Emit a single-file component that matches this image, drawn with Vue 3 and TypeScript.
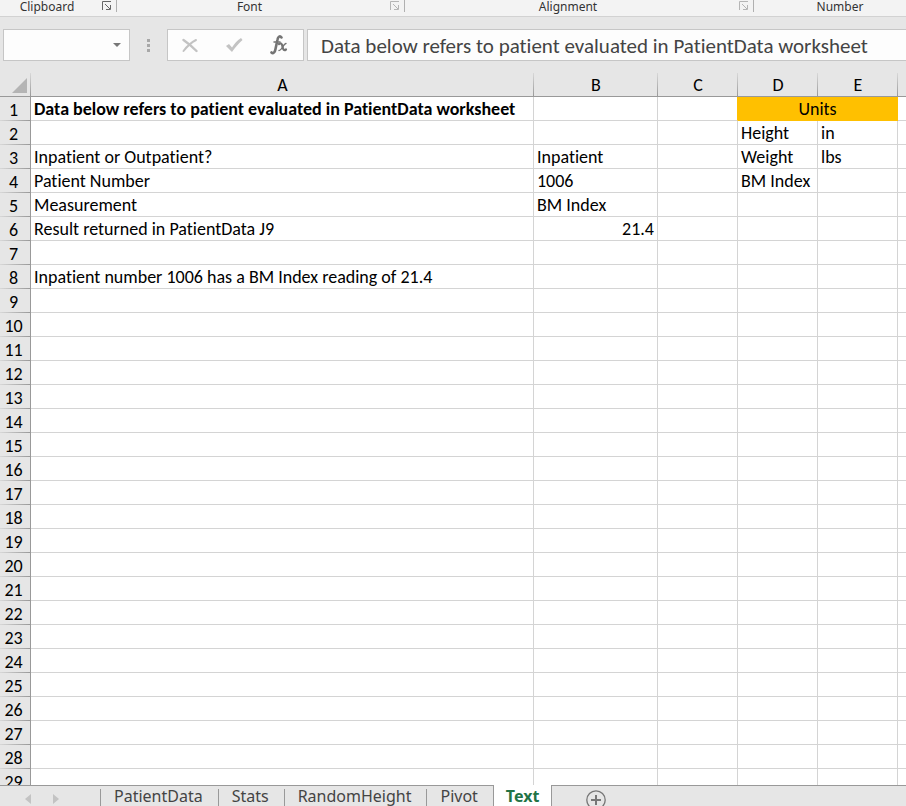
<script setup lang="ts">
import { ref } from 'vue'

interface Group { name: string; kind: string; active: boolean; launcher: boolean }
interface Cell { text: string; kind?: string; span?: number }

const groups: Group[] = [
  { name: 'Clipboard', kind: 'clipboard', active: true, launcher: true },
  { name: 'Font', kind: 'font', active: false, launcher: true },
  { name: 'Alignment', kind: 'alignment', active: false, launcher: true },
  { name: 'Number', kind: 'number', active: false, launcher: false },
]

const columns = ['A', 'B', 'C', 'D', 'E', '']
const formula = ref('Data below refers to patient evaluated in PatientData worksheet')
const cellName = ref('')

const content: Record<number, Cell[]> = {
  1: [
    { text: 'Data below refers to patient evaluated in PatientData worksheet', kind: 'bold' },
    { text: '' },
    { text: '', kind: 'before-units' },
    { text: 'Units', kind: 'units', span: 2 },
    { text: '' },
  ],
  2: [{ text: '' }, { text: '' }, { text: '' }, { text: 'Height' }, { text: 'in' }, { text: '' }],
  3: [{ text: 'Inpatient or Outpatient?' }, { text: 'Inpatient' }, { text: '' }, { text: 'Weight' }, { text: 'lbs' }, { text: '' }],
  4: [{ text: 'Patient Number' }, { text: '1006' }, { text: '' }, { text: 'BM Index' }, { text: '' }, { text: '' }],
  5: [{ text: 'Measurement' }, { text: 'BM Index' }, { text: '' }, { text: '' }, { text: '' }, { text: '' }],
  6: [{ text: 'Result returned in PatientData J9' }, { text: '21.4', kind: 'numeric' }, { text: '' }, { text: '' }, { text: '' }, { text: '' }],
  8: [{ text: 'Inpatient number 1006 has a BM Index reading of 21.4' }, { text: '' }, { text: '' }, { text: '' }, { text: '' }, { text: '' }],
}
const blank: Cell[] = columns.map(() => ({ text: '' }))
const rows = Array.from({ length: 29 }, (_, i) => ({ number: i + 1, cells: content[i + 1] ?? blank }))

const sheets = ['PatientData', 'Stats', 'RandomHeight', 'Pivot', 'Text']
const current = ref('Text')
</script>

<template>
  <div class="workbook">
    <header class="ribbon">
      <div v-for="g in groups" :key="g.name" class="group" :class="g.kind">
        <span class="group-name">{{ g.name }}</span>
        <button v-if="g.launcher" class="launcher" :class="{ active: g.active }" :aria-label="g.name + ' settings'">
          <svg width="10" height="10" viewBox="0 0 10 10" fill="none" stroke="currentColor">
            <path d="M0.5 9V0.5H9M3 3L8 8M8.5 4V8.5H4" />
          </svg>
        </button>
      </div>
    </header>

    <div class="formula-bar">
      <div class="name-box">
        <input v-model="cellName" class="name-input" aria-label="Name box" />
        <button class="name-arrow" aria-label="Named ranges">
          <svg width="8" height="4" viewBox="0 0 8 4"><path d="M0 0H8L4 4Z" fill="#777" /></svg>
        </button>
      </div>
      <svg class="grip" width="3" height="13" viewBox="0 0 3 13" fill="#a8a8a8">
        <path d="M0 0H3V3H0ZM0 5H3V8H0ZM0 10H3V13H0Z" />
      </svg>
      <div class="actions">
        <button class="action" aria-label="Cancel">
          <svg width="16" height="15" viewBox="0 0 16 15" fill="none" stroke="#c3c3c3" stroke-linecap="round">
            <path d="M1.500 2C6 5 10 8.500 14.500 13" stroke-width="2.400" />
            <path d="M14 2C9 4.500 5 8.500 1.500 13" stroke-width="2" />
          </svg>
        </button>
        <button class="action" aria-label="Enter">
          <svg width="18" height="16" viewBox="0 0 18 16" fill="#c3c3c3">
            <path d="M1 9L4 7L7 10.500C9.500 6.500 12 3.500 16 1L17.500 3C13.500 6.500 10 10.500 7 15Z" />
          </svg>
        </button>
        <button class="action" aria-label="Insert function">
          <svg width="18" height="20" viewBox="0 0 18 20" fill="none" stroke="#747474" stroke-linecap="round">
            <path d="M11.500 2.500C10 0.500 8 1.500 7.500 4.500L5.500 14C5 17.500 3 19 1.500 17.500" stroke-width="2.600" />
            <path d="M4 7H10" stroke-width="1.500" />
            <path d="M9 9C11 7.500 12 9 12.500 11.500C13 14.500 14 16 16 14.500" stroke-width="2.200" />
            <path d="M16 8.500C13.500 8.500 12 15.500 9 15.500" stroke-width="1.400" />
          </svg>
        </button>
      </div>
      <input v-model="formula" class="formula-input" aria-label="Formula" />
    </div>

    <main class="grid-area">
      <table class="sheet">
        <colgroup>
          <col class="w-head" /><col class="w-a" /><col class="w-b" />
          <col class="w-c" /><col class="w-c" /><col class="w-c" /><col />
        </colgroup>
        <thead>
          <tr>
            <th class="corner">
              <svg width="15" height="15" viewBox="0 0 15 15"><path d="M15 0V15H0Z" fill="#b4b4b4" /></svg>
            </th>
            <th v-for="(c, i) in columns" :key="i" class="col-head" scope="col">{{ c }}</th>
          </tr>
        </thead>
        <tbody>
          <tr v-for="r in rows" :key="r.number">
            <th class="row-head" scope="row">{{ r.number }}</th>
            <td v-for="(c, i) in r.cells" :key="i" :class="c.kind" :colspan="c.span ?? 1">{{ c.text }}</td>
          </tr>
        </tbody>
      </table>
    </main>

    <footer class="tab-bar">
      <div class="tab-nav">
        <button class="nav" aria-label="Previous sheet">
          <svg width="6" height="10" viewBox="0 0 6 10"><path d="M6 0V10L0 5Z" fill="#c3c3c3" /></svg>
        </button>
        <button class="nav" aria-label="Next sheet">
          <svg width="6" height="10" viewBox="0 0 6 10"><path d="M0 0V10L6 5Z" fill="#c3c3c3" /></svg>
        </button>
      </div>
      <button v-for="s in sheets" :key="s" class="tab" :class="{ current: s === current }" @click="current = s">
        {{ s }}
      </button>
      <button class="add" aria-label="New sheet">
        <svg width="20" height="20" viewBox="0 0 20 20" fill="none" stroke="#777">
          <circle cx="10" cy="10" r="9.200" stroke-width="1.300" />
          <path d="M10 5V15M5 10H15" stroke-width="2" />
        </svg>
      </button>
    </footer>
  </div>
</template>

<style>
body {
  margin: 0;
  overflow: hidden;
}
</style>

<style scoped>
.workbook {
  display: flex;
  flex-direction: column;
  height: 100vh;
  overflow: hidden;
  background: #e6e6e6;
  font-family: Carlito, Lato, sans-serif;
  font-variant-ligatures: none;
  color: #000;
}
button {
  display: flex;
  align-items: center;
  justify-content: center;
  padding: 0;
  border: 0;
  background: none;
  font: inherit;
  color: inherit;
}
input {
  box-sizing: border-box;
  border: 0;
  outline: 0;
  background: none;
  font: inherit;
  font-variant-ligatures: none;
  color: inherit;
}
.ribbon {
  display: flex;
  flex: none;
  height: 16px;
  background: #f3f3f3;
  border-bottom: 1px solid #d2d2d2;
  font-family: "Noto Sans", sans-serif;
  font-size: 12px;
  line-height: 14px;
  color: #333;
}
.group {
  display: flex;
  flex: none;
  box-sizing: border-box;
  height: 12px;
  border-right: 1px solid #b0b0b0;
}
.clipboard { width: 117px; }
.font { width: 288px; }
.alignment { width: 349px; }
.number { width: 172px; border-right: 0; }
.group-name {
  flex: 1;
  text-align: center;
}
.launcher {
  justify-content: flex-end;
  width: 22px;
  height: 12px;
  padding-right: 4px;
  color: #b5b5b5;
}
.launcher.active { color: #666; }
.formula-bar {
  display: flex;
  flex: none;
  align-items: center;
  height: 32px;
  padding: 12px 0;
}
.name-box {
  display: flex;
  box-sizing: border-box;
  width: 127px;
  height: 32px;
  margin-left: 3px;
  background: #fdfdfd;
  border: 1px solid #c6c6c6;
}
.name-input {
  flex: 1;
  min-width: 0;
  padding: 0 8px;
  font-size: 18px;
}
.name-arrow { width: 24px; }
.grip { margin: 0 17px; }
.actions {
  display: flex;
  box-sizing: border-box;
  width: 137px;
  height: 32px;
  padding-right: 2px;
  background: #fdfdfd;
  border: 1px solid #c6c6c6;
}
.action { flex: 1; }
.formula-input {
  flex: 1;
  min-width: 0;
  height: 32px;
  margin-left: 3px;
  padding: 1px 13px 0;
  background: #fdfdfd;
  border: 1px solid #c6c6c6;
  border-right: 0;
  font-size: 21px;
  color: #444;
}
.grid-area {
  flex: 1;
  min-height: 0;
  overflow: hidden;
  background: #fff;
}
.sheet {
  width: 100%;
  table-layout: fixed;
  border-spacing: 0;
  font-size: 18px;
  line-height: 21px;
}
.w-head { width: 31px; }
.w-a { width: 503px; }
.w-b { width: 124px; }
.w-c { width: 80px; }
th, td {
  box-sizing: border-box;
  white-space: nowrap;
  font-weight: 400;
}
.corner, .col-head {
  height: 24px;
  padding: 2px 0 0;
  border-bottom: 1px solid #999;
  background: linear-gradient(#d8d8d8, #999) right / 1px 100% no-repeat #e6e6e6;
}
.col-head:last-child { background: #e6e6e6; }
.corner {
  padding: 0 4px 3px 0;
  text-align: right;
  vertical-align: bottom;
  line-height: 0;
}
.row-head {
  height: 24px;
  padding: 2px 3px 0 0;
  border-right: 1px solid #999;
  background: linear-gradient(90deg, #d8d8d8, #999) bottom / 100% 1px no-repeat #e6e6e6;
  text-align: center;
}
td {
  height: 24px;
  padding: 2px 3px 0;
  border-right: 1px solid #d4d4d4;
  border-bottom: 1px solid #d4d4d4;
}
td:last-child { border-right: 0; }
td.bold { font-weight: 700; }
td.numeric { text-align: right; }
td.before-units { border-right-color: #ffc000; }
td.units {
  background: #ffc000;
  border-color: #ffc000;
  text-align: center;
}
.tab-bar {
  display: flex;
  flex: none;
  height: 21px;
  overflow: hidden;
  background: linear-gradient(#999, #999) top / 100% 1px no-repeat #e6e6e6;
  font-family: "Noto Sans", sans-serif;
  font-size: 16px;
  line-height: 22px;
  color: #444;
}
.tab-nav {
  display: flex;
  gap: 22px;
  width: 75px;
  padding: 5px 0 0 25px;
}
.nav {
  height: 18px;
}
.tab {
  flex: none;
  align-items: flex-start;
  height: 21px;
  padding: 0 15px 0 14px;
  background: linear-gradient(#999, #999) left 4px / 1px 100% no-repeat;
}
.tab.current {
  padding: 0 12px;
  background: #fff;
  border: solid #999;
  border-width: 0 1px;
  font-weight: 700;
  color: #217346;
}
.add {
  flex: none;
  height: 20px;
  margin: 5px 0 0 34px;
}
</style>
